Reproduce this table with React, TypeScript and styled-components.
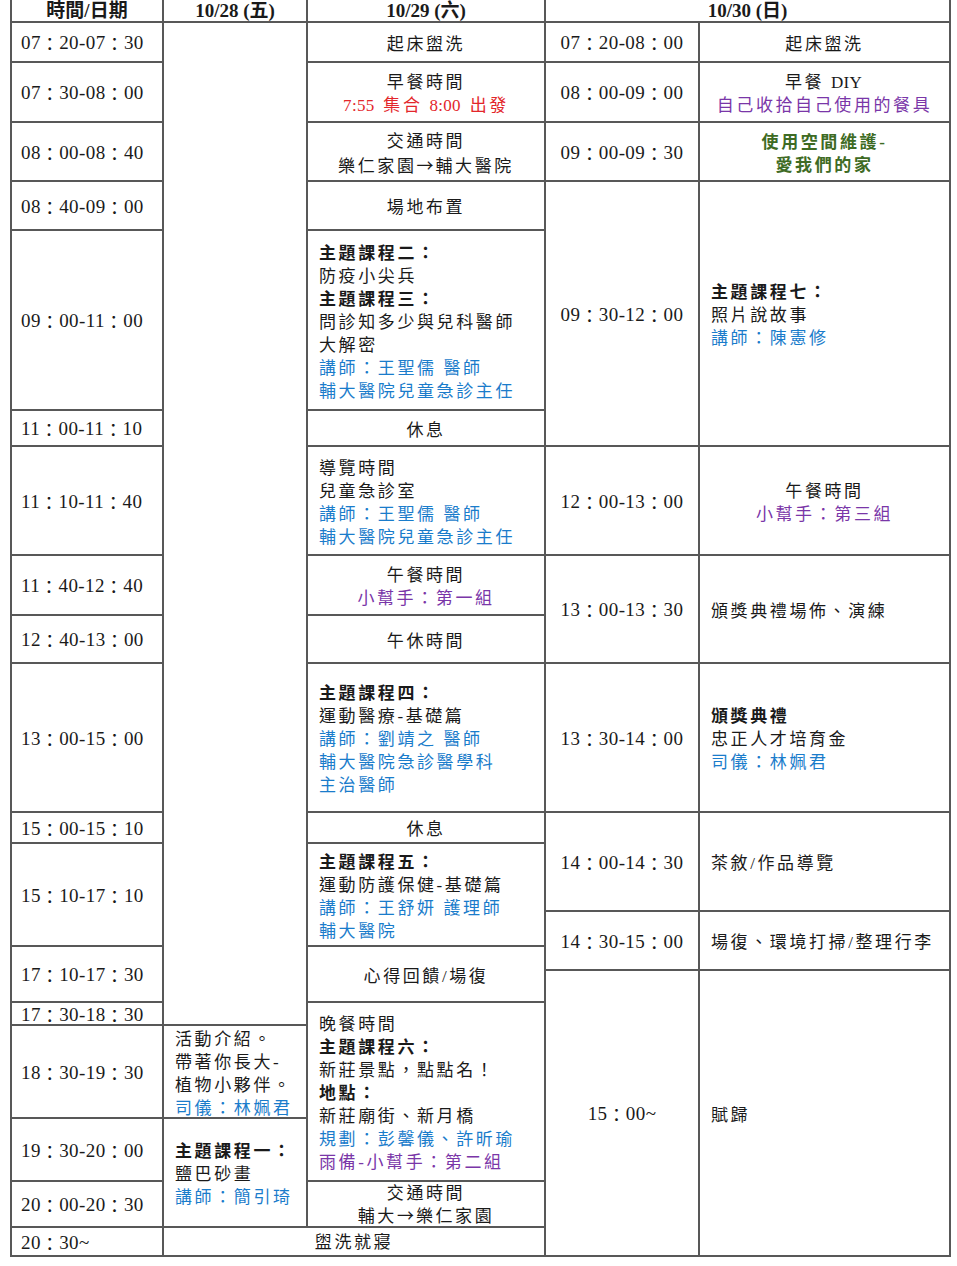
import React from 'react';
import styled, { createGlobalStyle } from 'styled-components';

const Global = createGlobalStyle`
  html, body { margin: 0; padding: 0; background: #fff; }
  body {
    font-family: "Liberation Serif", "Noto Sans CJK TC", serif;
    color: #1a1a1a;
  }
`;

type Tone = 'ink' | 'red' | 'blue' | 'purple' | 'green';
type Line = { text: string; tone?: Tone; bold?: boolean };
type Kind = 'time' | 'timeC' | 'center' | 'left' | 'blank';
type CellData = { c: string; r: string; kind: Kind; lines?: Line[]; time?: string; dense?: boolean };

const toneColor: Record<Tone, string> = {
  ink: '#1a1a1a',
  red: '#e3262b',
  blue: '#1a7ccb',
  purple: '#7a36a8',
  green: '#3e6b24',
};

const Schedule = styled.div`
  margin-left: 10px;
  width: 941px;
  box-sizing: border-box;
  display: grid;
  grid-template-columns: 150px 142px 236px 152px 249px;
  grid-template-rows: 21px 38px 58px 57px 47px 178px 34px 107px 58px 46px 147px 29px 66px 33px 22px 30px 21px 91px 61px 44px 27px;
  gap: 2px;
  padding: 0 2px 2px 2px;
  background: #585858;
`;

const Head = styled.div<{ $c: string }>`
  grid-column: ${(p) => p.$c};
  grid-row: 1 / 2;
  background: #fff;
  display: flex;
  align-items: center;
  justify-content: center;
  padding-top: 1px;
  font-size: 19px;
  font-weight: bold;
  line-height: 20px;
  white-space: nowrap;
  overflow: hidden;
`;

const Cell = styled.div<{ $c: string; $r: string; $kind: Kind; $dense: boolean }>`
  grid-column: ${(p) => p.$c};
  grid-row: ${(p) => p.$r};
  background: #fff;
  display: flex;
  flex-direction: column;
  justify-content: center;
  align-items: ${(p) => (p.$kind === 'center' || p.$kind === 'timeC' ? 'center' : 'flex-start')};
  padding: ${(p) =>
    p.$kind === 'time'
      ? '0 0 0 9px'
      : p.$kind === 'timeC'
      ? '0'
      : p.$dense
      ? '1px 11px 0 11px'
      : '4px 11px 0 11px'};
  overflow: ${(p) => (p.$kind === 'time' || p.$kind === 'timeC' ? 'visible' : 'hidden')};
  min-width: 0;
  line-height: ${(p) => (p.$dense ? '21px' : '23px')};
`;

const TimeText = styled.div`
  font-size: 19px;
  letter-spacing: 0.4px;
  line-height: 19px;
  padding-top: 1px;
  white-space: nowrap;
`;

const Colon = styled.span`
  font-family: "Noto Sans CJK TC", sans-serif;
  font-size: 18px;
  line-height: 12px;
  vertical-align: -2px;
`;

const Text = styled.div<{ $tone: Tone; $bold: boolean }>`
  font-size: 17px;
  letter-spacing: 2.6px;
  white-space: nowrap;
  color: ${(p) => toneColor[p.$tone]};
  font-weight: ${(p) => (p.$bold ? 'bold' : 'normal')};
`;

const Latin = styled.span`
  letter-spacing: 0.3px;
  margin-right: 2px;
`;

const Arrow = styled.span`
  font-family: "Noto Sans CJK TC", sans-serif;
  letter-spacing: 2px;
`;

const n = (text: string): Line => ({ text });
const bd = (text: string): Line => ({ text, bold: true });
const bl = (text: string): Line => ({ text, tone: 'blue' });
const pu = (text: string): Line => ({ text, tone: 'purple' });

const t = (c: string, r: string, time: string, centered = false): CellData => ({
  c,
  r,
  kind: centered ? 'timeC' : 'time',
  time,
});

const cells: CellData[] = [
  t('1', '2 / 3', '07：20-07：30'),
  t('1', '3 / 4', '07：30-08：00'),
  t('1', '4 / 5', '08：00-08：40'),
  t('1', '5 / 6', '08：40-09：00'),
  t('1', '6 / 7', '09：00-11：00'),
  t('1', '7 / 8', '11：00-11：10'),
  t('1', '8 / 9', '11：10-11：40'),
  t('1', '9 / 10', '11：40-12：40'),
  t('1', '10 / 11', '12：40-13：00'),
  t('1', '11 / 12', '13：00-15：00'),
  t('1', '12 / 13', '15：00-15：10'),
  t('1', '13 / 15', '15：10-17：10'),
  t('1', '15 / 17', '17：10-17：30'),
  t('1', '17 / 18', '17：30-18：30'),
  t('1', '18 / 19', '18：30-19：30'),
  t('1', '19 / 20', '19：30-20：00'),
  t('1', '20 / 21', '20：00-20：30'),
  t('1', '21 / 22', '20：30~'),

  { c: '2', r: '2 / 18', kind: 'blank' },
  {
    c: '2',
    r: '18 / 19',
    kind: 'left',
    lines: [n('活動介紹。'), n('帶著你長大-'), n('植物小夥伴。'), bl('司儀：林姵君')],
  },
  { c: '2', r: '19 / 21', kind: 'left', lines: [bd('主題課程一：'), n('鹽巴砂畫'), bl('講師：簡引琦')] },
  { c: '2 / 4', r: '21 / 22', kind: 'center', dense: true, lines: [n('盥洗就寢')] },

  { c: '3', r: '2 / 3', kind: 'center', lines: [n('起床盥洗')] },
  { c: '3', r: '3 / 4', kind: 'center', lines: [n('早餐時間'), { text: '7:55 集合 8:00 出發', tone: 'red' }] },
  { c: '3', r: '4 / 5', kind: 'center', lines: [n('交通時間'), n('樂仁家園→輔大醫院')] },
  { c: '3', r: '5 / 6', kind: 'center', lines: [n('場地布置')] },
  {
    c: '3',
    r: '6 / 7',
    kind: 'left',
    lines: [
      bd('主題課程二：'),
      n('防疫小尖兵'),
      bd('主題課程三：'),
      n('問診知多少與兒科醫師'),
      n('大解密'),
      bl('講師：王聖儒 醫師'),
      bl('輔大醫院兒童急診主任'),
    ],
  },
  { c: '3', r: '7 / 8', kind: 'center', lines: [n('休息')] },
  {
    c: '3',
    r: '8 / 9',
    kind: 'left',
    lines: [n('導覽時間'), n('兒童急診室'), bl('講師：王聖儒 醫師'), bl('輔大醫院兒童急診主任')],
  },
  { c: '3', r: '9 / 10', kind: 'center', lines: [n('午餐時間'), pu('小幫手：第一組')] },
  { c: '3', r: '10 / 11', kind: 'center', lines: [n('午休時間')] },
  {
    c: '3',
    r: '11 / 12',
    kind: 'left',
    lines: [bd('主題課程四：'), n('運動醫療-基礎篇'), bl('講師：劉靖之 醫師'), bl('輔大醫院急診醫學科'), bl('主治醫師')],
  },
  { c: '3', r: '12 / 13', kind: 'center', lines: [n('休息')] },
  {
    c: '3',
    r: '13 / 15',
    kind: 'left',
    lines: [bd('主題課程五：'), n('運動防護保健-基礎篇'), bl('講師：王舒妍 護理師'), bl('輔大醫院')],
  },
  { c: '3', r: '15 / 17', kind: 'center', lines: [n('心得回饋/場復')] },
  {
    c: '3',
    r: '17 / 20',
    kind: 'left',
    lines: [
      n('晚餐時間'),
      bd('主題課程六：'),
      n('新莊景點，點點名！'),
      bd('地點：'),
      n('新莊廟街、新月橋'),
      bl('規劃：彭馨儀、許昕瑜'),
      pu('雨備-小幫手：第二組'),
    ],
  },
  { c: '3', r: '20 / 21', kind: 'center', dense: true, lines: [n('交通時間'), n('輔大→樂仁家園')] },

  t('4', '2 / 3', '07：20-08：00', true),
  { c: '5', r: '2 / 3', kind: 'center', lines: [n('起床盥洗')] },
  t('4', '3 / 4', '08：00-09：00', true),
  { c: '5', r: '3 / 4', kind: 'center', lines: [n('早餐 DIY'), pu('自己收拾自己使用的餐具')] },
  t('4', '4 / 5', '09：00-09：30', true),
  {
    c: '5',
    r: '4 / 5',
    kind: 'center',
    lines: [
      { text: '使用空間維護-', tone: 'green', bold: true },
      { text: '愛我們的家', tone: 'green', bold: true },
    ],
  },
  t('4', '5 / 8', '09：30-12：00', true),
  { c: '5', r: '5 / 8', kind: 'left', lines: [bd('主題課程七：'), n('照片說故事'), bl('講師：陳憲修')] },
  t('4', '8 / 9', '12：00-13：00', true),
  { c: '5', r: '8 / 9', kind: 'center', lines: [n('午餐時間'), pu('小幫手：第三組')] },
  t('4', '9 / 11', '13：00-13：30', true),
  { c: '5', r: '9 / 11', kind: 'left', lines: [n('頒獎典禮場佈、演練')] },
  t('4', '11 / 12', '13：30-14：00', true),
  { c: '5', r: '11 / 12', kind: 'left', lines: [bd('頒獎典禮'), n('忠正人才培育金'), bl('司儀：林姵君')] },
  t('4', '12 / 14', '14：00-14：30', true),
  { c: '5', r: '12 / 14', kind: 'left', lines: [n('茶敘/作品導覽')] },
  t('4', '14 / 16', '14：30-15：00', true),
  { c: '5', r: '14 / 16', kind: 'left', lines: [n('場復、環境打掃/整理行李')] },
  t('4', '16 / 22', '15：00~', true),
  { c: '5', r: '16 / 22', kind: 'left', lines: [n('賦歸')] },
];

function renderTime(time: string) {
  return time.split('：').flatMap((part, i) =>
    i === 0 ? [part] : [<Colon key={i}>：</Colon>, part]
  );
}

function renderText(text: string) {
  const parts = text.split(/(→|[A-Za-z0-9:]+)/).filter((p) => p !== '');
  return parts.map((p, i) => {
    if (p === '→') return <Arrow key={i}>→</Arrow>;
    if (/^[A-Za-z0-9:]+$/.test(p)) return <Latin key={i}>{p}</Latin>;
    return <React.Fragment key={i}>{p}</React.Fragment>;
  });
}

export default function App() {
  return (
    <>
      <Global />
      <Schedule>
        <Head $c="1 / 2">時間/日期</Head>
        <Head $c="2 / 3">10/28 (五)</Head>
        <Head $c="3 / 4">10/29 (六)</Head>
        <Head $c="4 / 6">10/30 (日)</Head>
        {cells.map((cell, i) => (
          <Cell key={i} $c={cell.c} $r={cell.r} $kind={cell.kind} $dense={!!cell.dense}>
            {cell.time && <TimeText>{renderTime(cell.time)}</TimeText>}
            {cell.lines?.map((l, j) => (
              <Text key={j} $tone={l.tone ?? 'ink'} $bold={!!l.bold}>
                {renderText(l.text)}
              </Text>
            ))}
          </Cell>
        ))}
      </Schedule>
    </>
  );
}
